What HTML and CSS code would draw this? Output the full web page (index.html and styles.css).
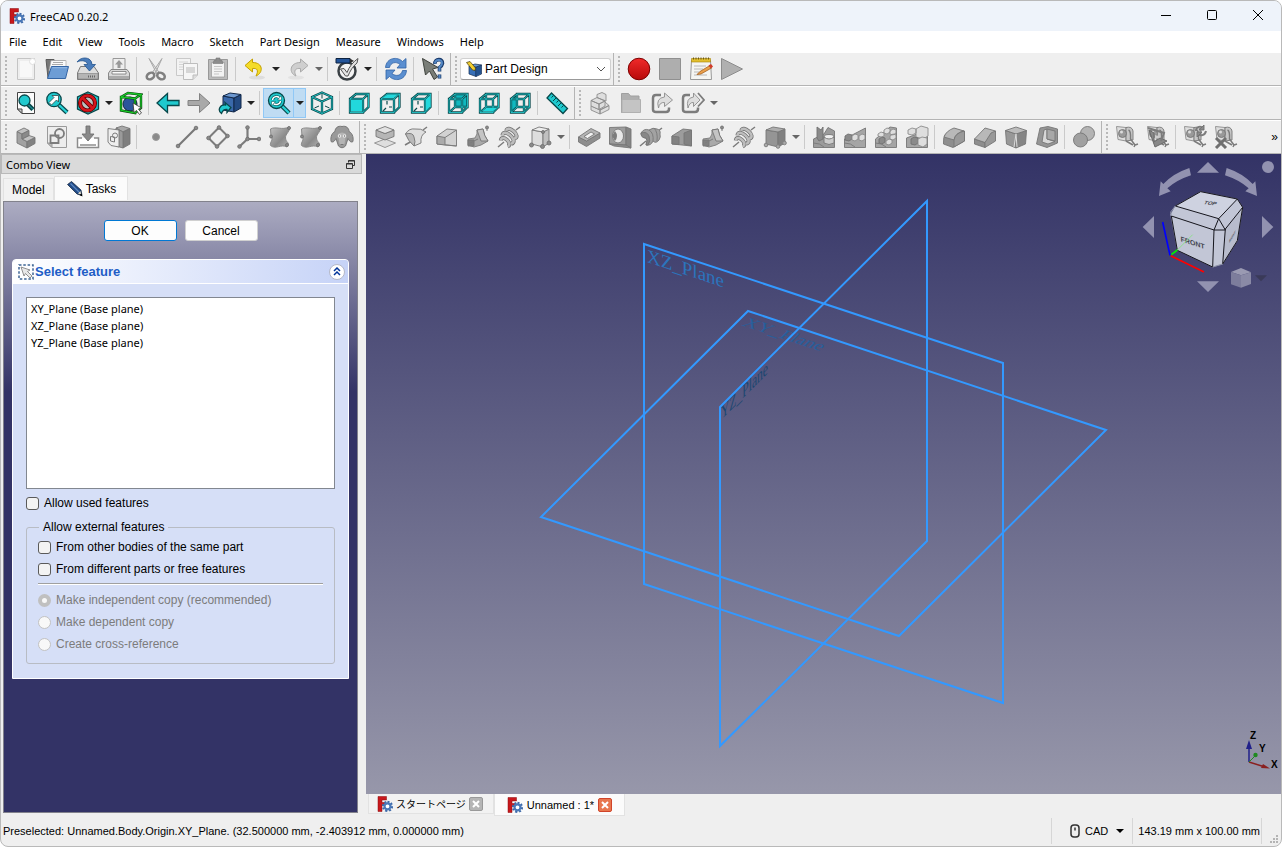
FILE: index.html
```
<!DOCTYPE html>
<html lang="en">
<head>
  <meta charset="UTF-8" />
  <meta name="viewport" content="width=device-width, initial-scale=1.0"/>
  <title>FreeCAD 0.20.2</title>
  <link rel="stylesheet" href="styles.css">
</head>
<body>
  <!-- Icon sprite -->
  <svg class="sprite" aria-hidden="true">
    <defs>
      <linearGradient id="grad-grey" x1="0" y1="0" x2="1" y2="1"><stop offset="0" stop-color="#c4c4c4"/><stop offset=".6" stop-color="#8a8a8a"/><stop offset="1" stop-color="#b4b4b4"/></linearGradient>
      <linearGradient id="grad-red" x1="0" y1="0" x2="0" y2="1"><stop offset="0" stop-color="#f02a2a"/><stop offset="1" stop-color="#b80a0a"/></linearGradient>
      <path id="wire" d="M3 8H16V21.500H3zM9 3H21.500V16H9zM3 8L9 3M16 8L21.500 3M16 21.500L21.500 16M3 21.500L9 16"/>
    </defs>
    <symbol id="i-logo" viewBox="0 0 16 16">
      <path fill="#c8181c" stroke="#8a0a0c" stroke-width=".5" d="M1 .5H9.500V4H5V6.500H8.500V9.500H5V15.500H1z"/>
      <path fill="none" stroke="#3c68a8" stroke-width="2.200" stroke-dasharray="1.900 1.600" d="M10.500 5.800a4.500 4.500 0 1 1-.01 0z"/>
      <circle cx="10.500" cy="10.300" r="3" fill="#fff" stroke="#4a78b8" stroke-width="2.200"/>
    </symbol>
    <symbol id="i-new" viewBox="0 0 24 24"><path fill="#eee" stroke="#c4c4c4" d="M3.500 1.500H20.500V22.500H3.500z"/><path fill="#f8f8f8" d="M6 4H18V20H6z"/><circle cx="18.500" cy="4.500" r="3" fill="#fff" stroke="#e0e0e0"/></symbol>
    <symbol id="i-open" viewBox="0 0 24 24"><path fill="#777" stroke="#5a5a5a" d="M1 2.500H9L10 4H20V21H3z"/><path fill="#fafafa" stroke="#999" stroke-width=".6" d="M6 3.500H21V14H4z"/><path stroke="#aaa" d="M8 5.500H18M7 7.500H18"/><path fill="#6d9dd5" stroke="#3465a4" d="M6.500 9.500H23.500L20.500 21.500H2.500z"/><path stroke="#94b9e6" d="M7.500 10.700H22"/></symbol>
    <symbol id="i-save" viewBox="0 0 24 24"><path fill="#ddd" stroke="#777" d="M4.500 9.500H18L22.500 16V22.500H1.500V16z"/><path fill="#b5b5b5" stroke="#888" stroke-width=".7" d="M2 16.500H22V22H2z"/><path stroke="#666" stroke-dasharray="1 1" stroke-width="2" d="M12 19.500H20"/><path fill="#4a7cba" stroke="#24548e" stroke-width=".8" d="M1 5C4 1 9 0 13 2Q16 4 16 7.500H19.500L13.500 14 8 7.500H11.500C11 4 6 2.500 1 5z"/></symbol>
    <symbol id="i-print" viewBox="0 0 24 24"><path fill="#eee" stroke="#999" d="M6 1.500H18V13H6z"/><path fill="#999" d="M12 3L16 7.500H13.500V11H10.500V7.500H8z"/><path fill="#d8d8d8" stroke="#888" d="M4 12.500H20L22.500 16V22.500H1.500V16z"/><path fill="#fafafa" stroke="#777" stroke-width=".8" d="M5 14.500H19V17H5z"/><path fill="#aaa" d="M2 19H22V22H2z"/></symbol>
    <symbol id="i-cut" viewBox="0 0 24 24"><path fill="#e6e6e6" stroke="#a8a8a8" d="M5 1.500L15.500 16 13 17zM18 1.500L8 16 11 17z"/><ellipse cx="6.500" cy="19" rx="4" ry="3" transform="rotate(-30 6.500 19)" fill="none" stroke="#808080" stroke-width="2.500"/><ellipse cx="17" cy="19" rx="4" ry="3" transform="rotate(30 17 19)" fill="none" stroke="#808080" stroke-width="2.500"/></symbol>
    <symbol id="i-copy" viewBox="0 0 24 24"><path fill="#f3f3f3" stroke="#c9c9c9" d="M1.500 1.500H15.500V18.500H1.500z"/><path stroke="#d4d4d4" d="M4 5H13M4 7.500H13M4 10H8M4 12.500H8"/><path fill="#f6f6f6" stroke="#bdbdbd" d="M8.500 6.500H22.500V18L18 22.500H8.500z"/><path fill="#d6d6d6" d="M11 10H20V16H11z"/><path fill="#ddd" stroke="#bdbdbd" d="M18 22.500V18H22.500"/></symbol>
    <symbol id="i-paste" viewBox="0 0 24 24"><path fill="#bbb" stroke="#999" d="M2.500 2.500H21.500V22.500H2.500z"/><path fill="#f2f2f2" stroke="#999" stroke-width=".7" d="M5.500 5.500H18.500V20H5.500z"/><path fill="#8c8c8c" stroke="#777" stroke-width=".6" d="M8 3.500H10V1H14V3.500H16L17 6.500H7z"/><path stroke="#c6c6c6" d="M8 9.500H16M8 12H16M8 14.500H16M8 17H13"/></symbol>
    <symbol id="i-undo" viewBox="0 0 24 24"><ellipse cx="14" cy="20.500" rx="8" ry="2" fill="#ddd"/><path fill="#f4dc28" stroke="#c4a000" d="M9.500 2L2 8.500 9.500 15V11.500C14 11 16 13 13 19 20.500 16 20.500 5.500 9.500 5.500z"/></symbol>
    <symbol id="i-redo" viewBox="0 0 24 24"><ellipse cx="10" cy="20.500" rx="8" ry="2" fill="#e2e2e2"/><path fill="#cfcfcf" stroke="#aaa" d="M14.500 2L22 8.500 14.500 15V11.500C10 11 7 13 10 19 2.500 16 3.500 5.500 14.500 5.500z"/></symbol>
    <symbol id="i-check" viewBox="0 0 24 24"><circle cx="12" cy="14" r="8.500" fill="#f4f4f4" stroke="#3a4044" stroke-width="2.500"/><path fill="#24559a" stroke="#0d2340" d="M1 1.500H15V6H1z"/><path fill="#333" d="M15 1.500L19 4 15 6z"/><path fill="#e4e4e4" stroke="#555" d="M5.500 12L9 11.500 12 15.500C14 10 18 5 23 1.500L22 6C18 9 15 14 13 19H10.500z"/></symbol>
    <symbol id="i-refresh" viewBox="0 0 24 24"><path fill="#5b8fd0" stroke="#2f62a6" stroke-width=".8" d="M1.500 10.500C2.500 0 14 -.5 18.500 4.500L22 1.500V11H13L16 7.500C12 4 6.500 5.500 5.500 10.500z"/><path fill="#5b8fd0" stroke="#2f62a6" stroke-width=".8" d="M22.500 13.500C21.500 24 10 24.500 5.500 19.500L2 22.500V13H11L8 16.500C12 20 17.500 18.500 18.500 13.500z"/></symbol>
    <symbol id="i-what" viewBox="0 0 24 24"><path fill="#7a7e78" stroke="#3e423d" d="M1.500 1.500L17 10.500 11.500 12 16.500 20 13 22.500 8.500 14 4.500 18z"/><path fill="none" stroke="#1d3e6e" stroke-width="3.600" d="M14 7C13 1.500 22.500 1 21.500 6.500Q21 9 18.500 10.500V14.500M18.500 17.500V21.500"/><path fill="none" stroke="#5387c4" stroke-width="2" d="M14 6.500C13.500 2 21.500 1.500 21 6.500Q20.500 9 18.500 10V14M18.500 18V21"/></symbol>
    <symbol id="i-pd" viewBox="0 0 16 16"><path fill="#3870b8" stroke="#122c50" stroke-width=".7" d="M3 5L10 6V15.500L3 13zM10 6L15.500 4V13L10 15.500z"/><path fill="#24528e" d="M10.400 6.500L15 4.500V12.600L10.400 14.800z"/><path fill="#6596d0" stroke="#122c50" stroke-width=".7" d="M3 5L9 3 15.500 4 10 6z"/><path fill="#f2ce30" stroke="#443a08" stroke-width=".7" d="M.500 1.500L4 .5 9.500 7 9 9.500 6.500 9z"/></symbol>
    <symbol id="i-rec" viewBox="0 0 24 24"><circle cx="12" cy="12" r="10.800" fill="url(#grad-red)" stroke="#7c0000"/></symbol>
    <symbol id="i-stop" viewBox="0 0 24 24"><path fill="#aeaeae" stroke="#909090" d="M1.500 1.500H22.500V22.500H1.500z"/></symbol>
    <symbol id="i-note" viewBox="0 0 24 24"><path fill="#f5f5f2" stroke="#999" d="M2.500 3.500H21.500L22.500 22.500H1.500z"/><path fill="#e2bf2e" stroke="#a58208" stroke-width=".6" d="M2.500 1.500H21.500V5H2.500z"/><path stroke="#6f5a10" stroke-dasharray="1 1.500" stroke-width="2" d="M4 1.500H21"/><path stroke="#b8b8b8" d="M5 9H17M5 12H14M5 15H11M5 18H18"/><path fill="#eaa04c" stroke="#9c5510" stroke-width=".7" d="M20 9L22.500 11 12 17 8 17.500 11 14.500z"/><path fill="#d23b2a" d="M19.500 8.500L22 7 24 9.500 22 11.500z"/></symbol>
    <symbol id="i-play" viewBox="0 0 24 24"><path fill="#b0b0b0" stroke="#8c8c8c" d="M1.500 1.500L22.500 12 1.500 22.500z"/></symbol>

    <symbol id="i-fit" viewBox="0 0 24 24"><path fill="#fbfbfb" stroke="#444" d="M3.500 1.500H20.500V22.500H8L3.500 18z"/><path fill="#ccc" stroke="#444" d="M3.500 18H8V22.500z"/><path class="t-line" d="M13.500 13L19 18.500"/><path class="t-in" d="M13.500 13L19 18.500"/><circle class="teal" cx="10.500" cy="9.500" r="5.500"/></symbol>
    <symbol id="i-zoomsel" viewBox="0 0 24 24"><path class="t-line" d="M14 14L22 21.500"/><path class="t-in wide" d="M14 14L22 21.500"/><circle class="teal" cx="9" cy="8.500" r="7.200"/><path fill="#fff" stroke="#2d4748" stroke-width=".8" d="M7 4.500H13.500V11L11.500 9 6.500 14 4 11.500 9 6.500z"/></symbol>
    <symbol id="i-nostyle" viewBox="0 0 24 24"><path class="teal" d="M12 1L22.500 6V18L12 23 1.500 18V6z"/><circle cx="11.500" cy="12" r="7.500" fill="#b9c2c2" stroke="#5c0000" stroke-width="4.200"/><path stroke="#5c0000" stroke-width="4.500" d="M6.500 7L16.500 17"/><circle cx="11.500" cy="12" r="7.500" fill="none" stroke="#d4141c" stroke-width="2.600"/><path stroke="#d4141c" stroke-width="2.600" d="M6.500 7L16.500 17"/></symbol>
    <symbol id="i-bbox" viewBox="0 0 24 24"><circle cx="11" cy="13" r="7" fill="#2b559b" stroke="#10243f"/><path fill="none" stroke="#033f08" stroke-width="2.400" d="M2 6L16 7.500V22L2 19.500zM2 6L9 2 22 3.500 16 7.500M22 3.500V17L16 22"/><path fill="none" stroke="#18c828" stroke-width="1.300" d="M2 6L16 7.500V22L2 19.500zM2 6L9 2 22 3.500 16 7.500M22 3.500V17L16 22"/><path fill="#fff" stroke="#333" stroke-width=".8" d="M14 12L22.500 17 19.500 18 22.500 22 20.500 23.500 17.500 19.500 15 21.500z"/></symbol>
    <symbol id="i-left" viewBox="0 0 24 24"><path class="teal" d="M1 12L11.500 2.500V9.500H23V14.500H11.500V21.500z"/></symbol>
    <symbol id="i-right" viewBox="0 0 24 24"><path class="g" d="M23 12L12.500 2.500V9.500H1V14.500H12.500V21.500z"/></symbol>
    <symbol id="i-link" viewBox="0 0 24 24"><path fill="#3a69ab" stroke="#112748" d="M5 5L16 7V21L5 19z"/><path fill="#234a82" stroke="#112748" d="M16 7L23 3.500V17L16 21z"/><path fill="#6c97cf" stroke="#112748" d="M5 5L12 2 23 3.500 16 7z"/><path class="teal" d="M7 11.500L13 16.500 9 21.500V18.500C6 18 4.500 20 3.500 22.500 -1 19 2 13.500 7.500 14z"/></symbol>
    <symbol id="i-zoomsync" viewBox="0 0 24 24"><path class="t-line" d="M15 15L22 22"/><path class="t-in wide" d="M15 15L22 22"/><circle class="teal" cx="9.500" cy="9.500" r="8"/><path fill="none" stroke="#0b6064" stroke-width="3" d="M5.500 9C6 5 11 4.500 13 7.500M13.500 10C13 14 8 14.500 6 12"/><path fill="none" stroke="#fff" stroke-width="1.500" d="M5.500 9C6 5 11 4.500 13 7.500M13.500 10C13 14 8 14.500 6 12"/><path fill="#fff" stroke="#0b6064" stroke-width=".6" d="M14.500 4.500V9H10.500zM4.500 15V10.500H8.500z"/></symbol>
    <symbol id="i-iso" viewBox="0 0 24 24"><path class="t-line thin" d="M12 1.500L22 6V18L12 22.500 2 18V6zM2 6L12 10.500 22 6M12 10.500V22.500"/><path class="t-in" d="M12 1.500L22 6V18L12 22.500 2 18V6zM2 6L12 10.500 22 6M12 10.500V22.500"/><path stroke="#08484b" d="M4.500 17L9 15M19.500 17L15 15M12 3V7.500"/></symbol>
    <symbol id="i-front" viewBox="0 0 24 24"><use href="#wirebox"/><path fill="#22d8dc" d="M4 9H15V20.500H4z"/></symbol>
    <symbol id="i-top" viewBox="0 0 24 24"><use href="#wirebox"/><path fill="#22d8dc" d="M4.500 7L9.500 3.500H20L15.500 7z"/></symbol>
    <symbol id="i-rightv" viewBox="0 0 24 24"><use href="#wirebox"/><path fill="#22d8dc" d="M16.800 8.500L21 4.500V15.500L16.800 20z"/></symbol>
    <symbol id="i-rear" viewBox="0 0 24 24"><path fill="#10b8bf" d="M9 3H21.500V16H9z"/><use href="#wire" class="t-line thin"/><use href="#wire" class="t-in"/></symbol>
    <symbol id="i-bottom" viewBox="0 0 24 24"><use href="#wire" class="t-line thin"/><use href="#wire" class="t-in"/><path fill="#22d8dc" d="M5 20.500L9.500 17H20L15.500 20.500z"/></symbol>
    <symbol id="i-leftv" viewBox="0 0 24 24"><path fill="#10b8bf" d="M3 8L9 3V16L3 21.500z"/><use href="#wire" class="t-line thin"/><use href="#wire" class="t-in"/></symbol>
    <symbol id="i-ruler" viewBox="0 0 24 24"><path class="teal" d="M6.500 2L22.500 17.500 18 22.500 2 7z"/><path stroke="#084548" d="M8.500 4.500L6.500 6.500M11 7L8 10M13.500 9.500L11.500 11.500M16 12L13 15M18.500 14.500L16.500 16.500"/></symbol>
    <symbol id="wirebox" viewBox="0 0 24 24"><path class="t-line thin" d="M3 8H16V21.500H3zM3 8L9 3H21.500V16L16 21.500M16 8L21.500 3"/><path class="t-in" d="M3 8H16V21.500H3zM3 8L9 3H21.500V16L16 21.500M16 8L21.500 3"/><path stroke="#08484b" stroke-width="1.200" d="M9 10V13.500M5 20L8 17M11 16H14"/></symbol>
    <symbol id="i-part" viewBox="0 0 24 24"><path class="gl" d="M3 15L12 19V23L3 19zM12 19L21 14.500V18.500L12 23zM12 13L17 11 21 14.500 12 19z"/><path class="gl" d="M3 9.500L11 13V18.500L3 15zM3 9.500L9 6.500 17 10 11 13zM11 13L17 10V15L11 18.500zM9 6.500V3.500L14 1.500 18 3.500V10L14 8.500z"/></symbol>
    <symbol id="i-folder" viewBox="0 0 24 24"><path fill="#b0b0b0" stroke="#a0a0a0" d="M2.500 2.500H9.500L11.500 5H20V21.500H2.500z"/><path fill="#c4c4c4" stroke="#b0b0b0" d="M3 8.500H21.500V21.500H3z"/></symbol>
    <symbol id="i-share" viewBox="0 0 24 24"><path class="n thick" d="M11 4H6Q3 4 3 7V18.500Q3 21 6 21H16Q19 21 19 18V16.500"/><path class="gl" d="M14.500 2L22.500 9 14.500 15.500V11.500Q9.500 11 8.500 17 5.500 7 14.500 6z"/></symbol>
    <symbol id="i-share2" viewBox="0 0 24 24"><path class="n thick" d="M9 4H5Q2 4 2 7V18.500Q2 21 5 21H14Q17 21 17 18V16.500"/><path class="gl" d="M12.500 2L19 9 12.500 15.500V11.500Q8.500 11 7 17 4.500 7 12.500 6z"/><path class="n" stroke-width="1.800" d="M17 2L23 9 17 15.500"/></symbol>

    <symbol id="i-body" viewBox="0 0 24 24"><path fill="#a2a2a2" class="s" d="M3 6.500L8 9V14L13 16.500V23L3 18z"/><path fill="#838383" class="s" d="M13 16.500L21 12.500V18.500L13 23z"/><path fill="#c2c2c2" class="s" d="M3 6.500L10 3 15 5.500 8 9zM8 14L15 10.500 21 12.500 13 16.500z"/><path fill="#8a8a8a" class="s" d="M8 9L15 5.500V10.500L8 14z"/></symbol>
    <symbol id="i-sketch" viewBox="0 0 24 24"><path fill="#ededed" stroke="#9a9a9a" d="M2.500 1.500H21.500V22.500H7L2.500 18z"/><path fill="#bbb" stroke="#9a9a9a" d="M2.500 18H7V22.500z"/><circle cx="14.500" cy="8.500" r="4.500" class="n" stroke-width="1.800"/><path class="n" stroke-width="1.800" d="M5.500 10.500H13.500V18H5.500z"/></symbol>
    <symbol id="i-import" viewBox="0 0 24 24"><path fill="#fff" stroke="#8c8c8c" stroke-width="1.500" d="M6 13H1.500V22.500H22.500V13H18"/><path class="gd" d="M10 1H14V9H18L12 16 6 9H10z"/><path stroke="#aaa" stroke-width="2" d="M4 20H20"/></symbol>
    <symbol id="i-binder" viewBox="0 0 24 24"><path fill="#a8a8a8" class="s" d="M9 3L15 1 23 3.500 16 7z"/><path fill="#7e7e7e" class="s" d="M16 7L23 3.500V19L16 23z"/><path fill="#9a9a9a" class="s" d="M9 3L16 7V23L9 21z"/><path fill="#eee" class="s" d="M1 3.500L12 5V22L4 20.500 1 17z"/><circle cx="8" cy="10.500" r="2.500" class="n"/><path class="n" d="M3.500 11.500L7.500 12V17L3.500 16z"/></symbol>
    <symbol id="i-dot" viewBox="0 0 24 24"><circle cx="12" cy="12" r="3.500" fill="#8a8a8a" stroke="#9c9c9c"/></symbol>
    <symbol id="i-line" viewBox="0 0 24 24"><path stroke="#787878" stroke-width="2.200" d="M3 21L21 3"/><circle class="gd" cx="3" cy="21" r="1.800"/><circle class="gd" cx="21" cy="3" r="1.800"/></symbol>
    <symbol id="i-plane" viewBox="0 0 24 24"><path class="n" stroke-width="2" d="M13 2.500L21.500 11 11 21.500 2.500 13z"/><circle class="gd" cx="13" cy="2.500" r="1.800"/><circle class="gd" cx="21.500" cy="11" r="1.800"/><circle class="gd" cx="11" cy="21.500" r="1.800"/><circle class="gd" cx="2.500" cy="13" r="1.800"/></symbol>
    <symbol id="i-axes" viewBox="0 0 24 24"><path class="n" stroke-width="2.200" d="M10.500 2V14H22M10.500 14L2.500 21.500"/><circle class="gd" cx="10.500" cy="2.500" r="1.800"/><circle class="gd" cx="10.500" cy="14" r="1.800"/><circle class="gd" cx="22" cy="14" r="1.800"/><circle class="gd" cx="2.500" cy="21.500" r="1.800"/></symbol>
    <symbol id="i-patch" viewBox="0 0 24 24"><path fill="url(#grad-grey)" stroke="#8a8a8a" d="M2.500 4C8 1 14 5.500 21 2 23 6 17 9 17.500 13 18 17 20 17 20.500 19L19 22C13 18.500 8 25 2.500 20.500 1.500 17 6 15 3 11.500z"/><circle class="gd" cx="21" cy="3" r="1.500"/><circle class="gd" cx="19" cy="20" r="1.500"/><circle class="gd" cx="3" cy="11.500" r="1.500"/></symbol>
    <symbol id="i-sheep" viewBox="0 0 24 24"><path fill="#999" stroke="#777" d="M12 1.500C8 .5 5 3 5 6.500 1 8 0 15 1.500 17 4 17.500 5 15 6 13.500L8.500 21Q12 24.500 15.500 21L18 13.500C19 15 20 17.500 22.500 17 24 15 23 8 19 6.500 19 3 16 .5 12 1.500z"/><path fill="#b4b4b4" d="M8 9Q12 6 16 9L14.500 19Q12 21.500 9.500 19z"/><circle cx="9.500" cy="11" r="1.800" fill="#e4e4e4"/><circle cx="14.500" cy="11" r="1.800" fill="#e4e4e4"/><path fill="#555" d="M9 10.500h1v1h-1zM14 10.500h1v1h-1z"/><path stroke="#777" d="M10.500 19.500H13.500"/></symbol>
    <symbol id="i-pad" viewBox="0 0 24 24"><path class="gl" d="M1.500 18L12 14 22.500 18 12 22.500z"/><path fill="#b6b6b6" class="s" d="M3 5V11.500L12 15 21 11.500V5L12 8.500z"/><path fill="#e2e2e2" class="s" d="M3 5L12 1.500 21 5 12 8.500z"/></symbol>
    <symbol id="i-revolve" viewBox="0 0 24 24"><path class="n" stroke-width="1.500" d="M1 20L8 16M19 5L23 2"/><path fill="#dedede" class="s" d="M1.500 9Q5 3 11 4 17 3 22 7 16 10 17 18L10 21Q11 13 6 11z"/><path fill="#b9b9b9" class="s" d="M1.500 9Q9 7 10 12 12 17 10 21 4 16 1.500 9z"/></symbol>
    <symbol id="i-loft" viewBox="0 0 24 24"><path fill="#d2d2d2" class="s" d="M2 11L12 4 21.500 5V21L12 20 2 19z"/><path fill="#ababab" class="s" d="M2 11L10 12.500V20L2 19z"/><path class="n" d="M10 12.500L21.500 5M10 20L21.500 21"/></symbol>
    <symbol id="i-pipe" viewBox="0 0 24 24"><path class="g" d="M2 14L9 13Q12 9 11 5L17 4Q18 11 22 16L15 20 8 22 2 20z"/><path fill="#c4c4c4" class="s" d="M11 5L15 16 22 16Q18 11 17 4z"/><path fill="#808080" class="s" d="M2 15H8V21H2z"/><circle class="gd" cx="21" cy="2.500" r="1.500"/><path class="n" d="M4 18L12 14M21 4V6"/></symbol>
    <symbol id="i-helix" viewBox="0 0 24 24"><path class="n" stroke-width="1.500" d="M1 22L7 17M19 5L23 2"/><g fill="none" transform="rotate(40 12 12)"><path stroke="#707070" stroke-width="4" d="M6 9C2 3 22 3 17 10M6 15C1 8 23 8 18 16M8 20C4 14 20 14 17 20"/><path stroke="#bdbdbd" stroke-width="2.500" d="M6 9C2 3 22 3 17 10M6 15C1 8 23 8 18 16M8 20C4 14 20 14 17 20"/></g></symbol>
    <symbol id="i-prim" viewBox="0 0 24 24"><path fill="#ddd" class="s" d="M4 5L15 7V22L4 19z"/><path fill="#c0c0c0" class="s" d="M15 7L21 4V18L15 22z"/><path fill="#eee" class="s" d="M4 5L11 2 21 4 15 7z"/><circle class="gd" cx="3.500" cy="20" r="2"/><circle class="gd" cx="14.500" cy="21.500" r="2"/><circle class="gd" cx="21" cy="18" r="2"/><circle class="gd" cx="15" cy="7" r="1.500"/></symbol>
    <symbol id="i-pocket" viewBox="0 0 24 24"><path fill="#8e8e8e" class="s" d="M1.500 12V17L9.500 21.500 23 13V8L9.500 16z"/><path fill="#b4b4b4" class="s" d="M1.500 12L14 3.500 23 8 9.500 16z"/><path fill="#f2f2f2" class="s" d="M7 11.500L14 7 17.500 9 10.500 13.500z"/></symbol>
    <symbol id="i-hole" viewBox="0 0 24 24"><path fill="#9d9d9d" class="s" d="M1.500 2.500L18 2V20L1.500 19z"/><path fill="#858585" class="s" d="M18 2L23 4V23L18 20z"/><ellipse cx="10" cy="11" rx="5.500" ry="7" fill="#e8e8e8" class="s"/><path fill="#7c7c7c" d="M7 6Q11 11 7 16 4.500 13 4.500 10z"/><path class="s" fill="#8b8b8b" d="M1.500 19L18 20 23 23 6 21z"/></symbol>
    <symbol id="i-groove" viewBox="0 0 24 24"><path class="n" stroke-width="1.500" d="M1 21L7 16M19 6L23 3"/><path fill="#a2a2a2" class="s" d="M2 8Q5 3 10 5 14 2 18 4 22 5 21 9 22 12 20 15 17 19 14 16 12 21 7 20 9 15 7 13 2 13 2 8z"/><path fill="#888" class="s" d="M2 8Q8 6 10 11 12 16 9 20L7 20Q9 15 7 13 2 13 2 8z"/><path class="n" d="M10 5Q15 8 14 16M15 3Q19 7 18 16"/></symbol>
    <symbol id="i-subloft" viewBox="0 0 24 24"><path fill="#9c9c9c" class="s" d="M2 11L13 4 21.500 5V21L12 20 2 19z"/><path fill="#828282" class="s" d="M2 11L9 12V19.500L2 19zM14 8L21.500 5V21L14 19z"/></symbol>
    <symbol id="i-subprim" viewBox="0 0 24 24"><path fill="#959595" class="s" d="M3 5L15 7V22L3 19z"/><path fill="#808080" class="s" d="M15 7L22 4V18L15 22z"/><path fill="#aeaeae" class="s" d="M3 5L10 2 22 4 15 7z"/><circle class="g" cx="3" cy="20" r="1.800"/><circle class="g" cx="15" cy="21.500" r="1.800"/><circle class="g" cx="21.500" cy="18" r="1.800"/></symbol>
    <symbol id="i-mirror" viewBox="0 0 24 24"><path fill="#9b9b9b" class="s" d="M1.500 14L12 9 16 2.500 22.500 6V22.500H1.500z"/><path class="gd" d="M5 2L9 5 11 2V14L7 16 5 13z"/><path class="n" d="M1.500 18Q8 18 12 22"/><ellipse cx="17" cy="12" rx="5" ry="2.500" fill="#eee" class="s"/><path fill="#ccc" class="s" d="M12 12V18Q17 21 22 18V12Q17 16 12 12z"/></symbol>
    <symbol id="i-linpat" viewBox="0 0 24 24"><path fill="#a5a5a5" class="s" d="M1.500 14L22.500 3V22.500H1.500z"/><path class="gd" d="M2 11l3-2 4 1v4l-3 2-4-1z"/><path class="gl" d="M9 11l3-2 3 1v4l-3 2-3-1zM16 11l3-2 3 1v4l-3 2-3-1z"/><path class="n" d="M1.500 18Q8 18 12 22"/></symbol>
    <symbol id="i-polpat" viewBox="0 0 24 24"><path fill="#a5a5a5" class="s" d="M1.500 14L16 2 22.500 3V22.500H1.500z"/><path class="gd" d="M5 14l3-2 3 1v4l-3 2-3-1z"/><path class="gl" d="M4 9l3-2 3 1v3l-3 1-3-1zM10 5l3-2 3 1v3l-3 2-3-1zM16 6l3-2 3 1v3l-3 2-3-1zM12 16l3-2 3 1v3l-3 2-3-1zM16 11l3-2 3 1v3l-3 2-3-1z"/><path class="n" d="M1.500 18Q8 18 12 22"/></symbol>
    <symbol id="i-multi" viewBox="0 0 24 24"><path fill="#a5a5a5" class="s" d="M1.500 13L12 9H22.500V22.500H1.500z"/><path class="gl" d="M3 5l4-2 4 1v4l-4 2-4-1zM11 4l5-3 7 2v8l-5 3-7-2z"/><path class="gd" d="M6 14l3-2 4 1v5l-3 2-4-1z"/><path class="gl" d="M13 14l4-2 5 1v6l-4 3-5-2z"/></symbol>
    <symbol id="i-fillet" viewBox="0 0 24 24"><path fill="#8e8e8e" class="s" d="M1.500 17Q1 8 9 6L13 4 22.500 6.500V16L11 22.500 1.500 19z"/><path fill="#b8b8b8" class="s" d="M2 12Q4 6 12 3L22 6Q13 8 12 15z"/><path fill="#999" class="s" d="M12 15Q13 8 22.500 6V16L12 22z"/></symbol>
    <symbol id="i-chamfer" viewBox="0 0 24 24"><path fill="#8e8e8e" class="s" d="M1.500 14L12 17.500V22.500L1.500 19z"/><path fill="#b8b8b8" class="s" d="M1.500 14L12 3 22.500 6 12 17.500z"/><path fill="#999" class="s" d="M12 17.500L18 8 22.500 6V16L12 22.500z"/></symbol>
    <symbol id="i-draft" viewBox="0 0 24 24"><path fill="#989898" class="s" d="M1.500 5.500L12 9V23L2.500 19z"/><path fill="#858585" class="s" d="M12 9L22.500 5.500 21.500 19 12 23z"/><path fill="#bcbcbc" class="s" d="M1.500 5.500L12 2 22.500 5.500 12 9z"/><path stroke="#ddd" d="M12 9L13 22M12 9L10 22"/></symbol>
    <symbol id="i-shell" viewBox="0 0 24 24"><path fill="#959595" class="s" d="M5 3L13 1.500 22.500 4V18L12 22.500 1.500 19z"/><path fill="#d8d8d8" class="s" d="M9 5L12 4V14L20 16.500 13 19 7 17z"/><path fill="#a8a8a8" class="s" d="M12 4L20 6V16L12 14z"/></symbol>
    <symbol id="i-bool" viewBox="0 0 24 24"><circle cx="15.500" cy="8.500" r="7" fill="#b4b4b4" class="s"/><circle cx="8.500" cy="15" r="7" fill="#a0a0a0" class="s"/></symbol>
    <symbol id="i-tape" viewBox="0 0 24 24"><path class="gl" d="M1.500 1.500L11 2.500V16L3 14.500z"/><path fill="#c6c6c6" class="s" d="M11 2.500Q17 1 18 6V15L11 16z"/><circle cx="7.500" cy="8.500" r="4" fill="#999" class="s"/><circle cx="6.500" cy="7" r="1.500" fill="#ddd"/><path class="n" stroke-width="1.500" d="M13.500 5Q16 6 15.500 14L20 20 23 19M20 20L19 22M11 16L18 20"/></symbol>
    <symbol id="i-tape2" viewBox="0 0 24 24"><use href="#i-tape"/><path fill="#888" stroke="#6a6a6a" d="M3 5L8 8V17L14 13 21 16 9 22z"/><path fill="#ccc" d="M9 14V10L15 12z"/><path class="n" stroke-width="2" d="M2 3L18 8L15 16"/></symbol>
    <symbol id="i-tape3" viewBox="0 0 24 24"><use href="#i-tape"/><path class="n" stroke-width="2" d="M13 6C13 1 18 1 20 3M23 6C22 11 17 11 15 9"/><path class="gd" d="M21 0V5H16zM14 12V7H19z"/></symbol>
    <symbol id="i-tape4" viewBox="0 0 24 24"><use href="#i-tape"/><path stroke="#707070" stroke-width="3" d="M2 13L12 23M12 13L2 23"/></symbol>
  </svg>

  <header class="titlebar">
    <svg class="icon-sm"><use href="#i-logo"/></svg>
    <h1>FreeCAD 0.20.2</h1>
    <div class="window-buttons">
      <button type="button" aria-label="Minimize"><svg width="12" height="12"><path d="M1 6.500H11"/></svg></button>
      <button type="button" aria-label="Maximize"><svg width="12" height="12"><rect x="1.500" y="1.500" width="9" height="9" rx="1"/></svg></button>
      <button type="button" aria-label="Close"><svg width="12" height="12"><path d="M1 1L11 11M11 1L1 11"/></svg></button>
    </div>
  </header>

  <nav class="menubar">
    <a href="#">File</a>
    <a href="#">Edit</a>
    <a href="#">View</a>
    <a href="#">Tools</a>
    <a href="#">Macro</a>
    <a href="#">Sketch</a>
    <a href="#">Part Design</a>
    <a href="#">Measure</a>
    <a href="#">Windows</a>
    <a href="#">Help</a>
  </nav>

  <div class="toolbar-row">
    <div class="toolbar">
      <button type="button" class="tool" aria-label="New" disabled><svg class="icon"><use href="#i-new"/></svg></button>
      <button type="button" class="tool" aria-label="Open"><svg class="icon"><use href="#i-open"/></svg></button>
      <button type="button" class="tool" aria-label="Save"><svg class="icon"><use href="#i-save"/></svg></button>
      <button type="button" class="tool" aria-label="Print" disabled><svg class="icon"><use href="#i-print"/></svg></button>
      <span class="sep"></span>
      <button type="button" class="tool" aria-label="Cut" disabled><svg class="icon"><use href="#i-cut"/></svg></button>
      <button type="button" class="tool" aria-label="Copy" disabled><svg class="icon"><use href="#i-copy"/></svg></button>
      <button type="button" class="tool" aria-label="Paste" disabled><svg class="icon"><use href="#i-paste"/></svg></button>
      <span class="sep"></span>
      <button type="button" class="tool" aria-label="Undo"><svg class="icon"><use href="#i-undo"/></svg></button>
      <button type="button" class="drop" aria-label="Undo list"></button>
      <button type="button" class="tool" aria-label="Redo" disabled><svg class="icon"><use href="#i-redo"/></svg></button>
      <button type="button" class="drop" aria-label="Redo list" disabled></button>
      <span class="sep"></span>
      <button type="button" class="tool" aria-label="Edit mode"><svg class="icon"><use href="#i-check"/></svg></button>
      <button type="button" class="drop" aria-label="Edit modes"></button>
      <span class="sep"></span>
      <button type="button" class="tool" aria-label="Refresh"><svg class="icon"><use href="#i-refresh"/></svg></button>
      <span class="sep"></span>
      <button type="button" class="tool" aria-label="What's this?"><svg class="icon"><use href="#i-what"/></svg></button>
    </div>
    <div class="toolbar">
      <div class="workbench">
        <svg class="icon-sm"><use href="#i-pd"/></svg>
        <select aria-label="Workbench"><option>Part Design</option></select>
        <svg class="chevron" width="10" height="6"><path d="M1 1L5 5L9 1"/></svg>
      </div>
    </div>
    <div class="toolbar last">
      <button type="button" class="tool" aria-label="Record macro"><svg class="icon"><use href="#i-rec"/></svg></button>
      <button type="button" class="tool" aria-label="Stop macro" disabled><svg class="icon"><use href="#i-stop"/></svg></button>
      <button type="button" class="tool" aria-label="Macros"><svg class="icon"><use href="#i-note"/></svg></button>
      <button type="button" class="tool" aria-label="Execute macro" disabled><svg class="icon"><use href="#i-play"/></svg></button>
    </div>
  </div>

  <div class="toolbar-row">
    <div class="toolbar">
      <button type="button" class="tool" aria-label="Fit all"><svg class="icon"><use href="#i-fit"/></svg></button>
      <button type="button" class="tool" aria-label="Fit selection"><svg class="icon"><use href="#i-zoomsel"/></svg></button>
      <button type="button" class="tool" aria-label="Draw style"><svg class="icon"><use href="#i-nostyle"/></svg></button>
      <button type="button" class="drop" aria-label="Draw styles"></button>
      <button type="button" class="tool" aria-label="Bounding box"><svg class="icon"><use href="#i-bbox"/></svg></button>
      <span class="sep"></span>
      <button type="button" class="tool" aria-label="Back"><svg class="icon"><use href="#i-left"/></svg></button>
      <button type="button" class="tool" aria-label="Forward" disabled><svg class="icon"><use href="#i-right"/></svg></button>
      <button type="button" class="tool" aria-label="Go to linked object"><svg class="icon"><use href="#i-link"/></svg></button>
      <button type="button" class="drop" aria-label="Link actions"></button>
      <span class="sep"></span>
      <button type="button" class="tool on" aria-label="Sync view"><svg class="icon"><use href="#i-zoomsync"/></svg></button>
      <button type="button" class="drop on" aria-label="Sync view options"></button>
      <button type="button" class="tool" aria-label="Isometric"><svg class="icon"><use href="#i-iso"/></svg></button>
      <span class="sep"></span>
      <button type="button" class="tool" aria-label="Front"><svg class="icon"><use href="#i-front"/></svg></button>
      <button type="button" class="tool" aria-label="Top"><svg class="icon"><use href="#i-top"/></svg></button>
      <button type="button" class="tool" aria-label="Right"><svg class="icon"><use href="#i-rightv"/></svg></button>
      <span class="sep"></span>
      <button type="button" class="tool" aria-label="Rear"><svg class="icon"><use href="#i-rear"/></svg></button>
      <button type="button" class="tool" aria-label="Bottom"><svg class="icon"><use href="#i-bottom"/></svg></button>
      <button type="button" class="tool" aria-label="Left"><svg class="icon"><use href="#i-leftv"/></svg></button>
      <span class="sep"></span>
      <button type="button" class="tool" aria-label="Measure distance"><svg class="icon"><use href="#i-ruler"/></svg></button>
    </div>
    <div class="toolbar last">
      <button type="button" class="tool" aria-label="Create part" disabled><svg class="icon"><use href="#i-part"/></svg></button>
      <button type="button" class="tool" aria-label="Create group" disabled><svg class="icon"><use href="#i-folder"/></svg></button>
      <button type="button" class="tool" aria-label="Make link" disabled><svg class="icon"><use href="#i-share"/></svg></button>
      <button type="button" class="tool" aria-label="Make link group" disabled><svg class="icon"><use href="#i-share2"/></svg></button>
      <button type="button" class="drop" aria-label="Link groups" disabled></button>
    </div>
  </div>

  <div class="toolbar-row">
    <div class="toolbar">
      <button type="button" class="tool" aria-label="Create body" disabled><svg class="icon"><use href="#i-body"/></svg></button>
      <button type="button" class="tool" aria-label="Create sketch" disabled><svg class="icon"><use href="#i-sketch"/></svg></button>
      <button type="button" class="tool" aria-label="Edit sketch" disabled><svg class="icon"><use href="#i-import"/></svg></button>
      <button type="button" class="tool" aria-label="Map sketch to face" disabled><svg class="icon"><use href="#i-binder"/></svg></button>
      <span class="sep"></span>
      <button type="button" class="tool" aria-label="Datum point" disabled><svg class="icon"><use href="#i-dot"/></svg></button>
      <button type="button" class="tool" aria-label="Datum line" disabled><svg class="icon"><use href="#i-line"/></svg></button>
      <button type="button" class="tool" aria-label="Datum plane" disabled><svg class="icon"><use href="#i-plane"/></svg></button>
      <button type="button" class="tool" aria-label="Coordinate system" disabled><svg class="icon"><use href="#i-axes"/></svg></button>
      <button type="button" class="tool" aria-label="Shape binder" disabled><svg class="icon"><use href="#i-patch"/></svg></button>
      <button type="button" class="tool" aria-label="Sub-shape binder" disabled><svg class="icon"><use href="#i-patch"/></svg></button>
      <button type="button" class="tool" aria-label="Clone" disabled><svg class="icon"><use href="#i-sheep"/></svg></button>
    </div>
    <div class="toolbar">
      <button type="button" class="tool" aria-label="Pad" disabled><svg class="icon"><use href="#i-pad"/></svg></button>
      <button type="button" class="tool" aria-label="Revolution" disabled><svg class="icon"><use href="#i-revolve"/></svg></button>
      <button type="button" class="tool" aria-label="Additive loft" disabled><svg class="icon"><use href="#i-loft"/></svg></button>
      <button type="button" class="tool" aria-label="Additive pipe" disabled><svg class="icon"><use href="#i-pipe"/></svg></button>
      <button type="button" class="tool" aria-label="Additive helix" disabled><svg class="icon"><use href="#i-helix"/></svg></button>
      <button type="button" class="tool" aria-label="Additive primitive" disabled><svg class="icon"><use href="#i-prim"/></svg></button>
      <button type="button" class="drop" aria-label="Additive primitives" disabled></button>
      <span class="sep"></span>
      <button type="button" class="tool" aria-label="Pocket" disabled><svg class="icon"><use href="#i-pocket"/></svg></button>
      <button type="button" class="tool" aria-label="Hole" disabled><svg class="icon"><use href="#i-hole"/></svg></button>
      <button type="button" class="tool" aria-label="Groove" disabled><svg class="icon"><use href="#i-groove"/></svg></button>
      <button type="button" class="tool" aria-label="Subtractive loft" disabled><svg class="icon"><use href="#i-subloft"/></svg></button>
      <button type="button" class="tool" aria-label="Subtractive pipe" disabled><svg class="icon"><use href="#i-pipe"/></svg></button>
      <button type="button" class="tool" aria-label="Subtractive helix" disabled><svg class="icon"><use href="#i-helix"/></svg></button>
      <button type="button" class="tool" aria-label="Subtractive primitive" disabled><svg class="icon"><use href="#i-subprim"/></svg></button>
      <button type="button" class="drop" aria-label="Subtractive primitives" disabled></button>
      <span class="sep"></span>
      <button type="button" class="tool" aria-label="Mirrored" disabled><svg class="icon"><use href="#i-mirror"/></svg></button>
      <button type="button" class="tool" aria-label="Linear pattern" disabled><svg class="icon"><use href="#i-linpat"/></svg></button>
      <button type="button" class="tool" aria-label="Polar pattern" disabled><svg class="icon"><use href="#i-polpat"/></svg></button>
      <button type="button" class="tool" aria-label="MultiTransform" disabled><svg class="icon"><use href="#i-multi"/></svg></button>
      <span class="sep"></span>
      <button type="button" class="tool" aria-label="Fillet" disabled><svg class="icon"><use href="#i-fillet"/></svg></button>
      <button type="button" class="tool" aria-label="Chamfer" disabled><svg class="icon"><use href="#i-chamfer"/></svg></button>
      <button type="button" class="tool" aria-label="Draft" disabled><svg class="icon"><use href="#i-draft"/></svg></button>
      <button type="button" class="tool" aria-label="Thickness" disabled><svg class="icon"><use href="#i-shell"/></svg></button>
      <span class="sep"></span>
      <button type="button" class="tool" aria-label="Boolean operation" disabled><svg class="icon"><use href="#i-bool"/></svg></button>
    </div>
    <div class="toolbar last">
      <button type="button" class="tool" aria-label="Measure linear" disabled><svg class="icon"><use href="#i-tape"/></svg></button>
      <button type="button" class="tool" aria-label="Measure angular" disabled><svg class="icon"><use href="#i-tape2"/></svg></button>
      <span class="sep"></span>
      <button type="button" class="tool" aria-label="Measure refresh" disabled><svg class="icon"><use href="#i-tape3"/></svg></button>
      <button type="button" class="tool" aria-label="Measure clear all" disabled><svg class="icon"><use href="#i-tape4"/></svg></button>
      <button type="button" class="more" aria-label="More tools">»</button>
    </div>
  </div>

  <main>
    <aside class="dock">
      <div class="dock-title">
        <h2>Combo View</h2>
        <button type="button" aria-label="Float"><svg width="9" height="9"><path d="M2.500 2.500V.5H8.500V5.500H6.500M.5 3.500H6.500V8.500H.5zM.5 4H6.500M2.500 1H8.500"/></svg></button>
      </div>
      <div class="dock-tabs">
        <button type="button">Model</button>
        <button type="button" class="active">
          <svg width="16" height="16" viewBox="0 0 16 16"><path fill="#204a87" stroke="#0b1b30" stroke-width=".7" d="M.5 3.500L4.500 .5 14 9 15 14.500 10 13z"/><path stroke="#5c88bf" stroke-width="1.200" d="M3.500 2.500L12 11"/><path fill="#e8e0c8" d="M13.500 10L11 12.500 14 13.500z"/><path fill="#000" d="M14.500 12.500L15.500 15.500 12.500 14z"/></svg>
          Tasks
        </button>
      </div>
      <div class="task-panel">
        <div class="dialog-buttons">
          <button type="button" class="default">OK</button>
          <button type="button">Cancel</button>
        </div>

        <section class="task-box">
          <div class="task-head">
            <svg width="16" height="16" viewBox="0 0 16 16"><path fill="none" stroke="#3d6494" stroke-width="1.500" stroke-dasharray="2.500 1.800" d="M1 1H15V15H1z"/><path fill="#e8e8e8" stroke="#777" stroke-width=".8" d="M3 3L12 6 9.500 7.500 14 12 12 14 7.500 9.500 6 12z"/></svg>
            <h3>Select feature</h3>
            <button type="button" aria-label="Collapse"><svg width="8" height="9"><path d="M1 4L4 1L7 4M1 8L4 5L7 8"/></svg></button>
          </div>
          <div class="task-body">
            <ul class="feature-list">
              <li>XY_Plane (Base plane)</li>
              <li>XZ_Plane (Base plane)</li>
              <li>YZ_Plane (Base plane)</li>
            </ul>
            <label class="option used"><input type="checkbox">Allow used features</label>
            <fieldset>
              <legend>Allow external features</legend>
              <label class="option"><input type="checkbox">From other bodies of the same part</label>
              <label class="option"><input type="checkbox">From different parts or free features</label>
              <hr>
              <label class="option off"><input type="radio" name="copy" checked disabled>Make independent copy (recommended)</label>
              <label class="option off"><input type="radio" name="copy" disabled>Make dependent copy</label>
              <label class="option off"><input type="radio" name="copy" disabled>Create cross-reference</label>
            </fieldset>
          </div>
        </section>
      </div>
    </aside>

    <div class="workspace">
      <div class="view3d">
        <svg class="scene" viewBox="0 0 915 640" role="img" aria-label="Base planes">
          <g class="plane-label">
            <text class="xz" transform="matrix(1 .33 0 1 281 108)">XZ_Plane</text>
            <text class="xy" transform="matrix(1 .33 -.61 .61 375 171)">XY_Plane</text>
            <text class="yz" transform="matrix(.61 -.61 0 1 355 266)">YZ_Plane</text>
          </g>
          <path class="plane" d="M278 90L637 209V549L278 430z"/>
          <path class="plane" d="M354 253L561 47V387L354 592z"/>
          <path class="plane" d="M382 157L740 276 533 482 175 363z"/>
        </svg>

        <svg class="navcube" viewBox="60 12 423 438" aria-label="Navigation cube">
          <g fill="#9292b0">
            <path d="M264 36L297 68H231zM264 426L297 394H231zM68 231L102 198V264zM460 231L426 198V264z"/>
            <circle cx="444" cy="51" r="18"/>
            <path d="M208 54L213 76Q170 90 142 115L152 124 117 138 122 94 130 102Q160 70 208 54z"/>
            <path d="M320 54L315 76Q358 90 386 115L376 124 411 138 406 94 398 102Q368 70 320 54z"/>
          </g>
          <path fill="#c2c6d6" stroke="#c2c6d6" d="M152 193L166 168 242 125 352 147 368 172 352 272 308 342 278 351 172 301 153 200z"/>
          <path fill="#ced2e0" d="M166 168L242 125 352 147 296 206z"/>
          <path fill="#b8bccc" d="M316 238L368 172 352 272 308 342z"/>
          <g fill="none" stroke="#15151c" stroke-width="3">
            <path d="M166 168L242 125 352 147 296 206zM154 198L282 240 278 351 172 301zM316 237L368 172 352 272 308 342zM296 206L282 240H316zM352 147L368 172"/>
          </g>
          <path fill="none" stroke="#8e93a8" stroke-width="3" d="M154 198L152 186 166 168M278 351L308 342"/>
          <text class="face" font-size="21" transform="matrix(1 .32 .05 1 182 274)">FRONT</text>
          <text class="face" font-size="18" transform="matrix(1 .12 -.5 .8 250 162)">TOP</text>
          <text class="face" font-size="13" transform="matrix(.45 -.75 0 1 328 280)">RIGHT</text>
          <g fill="none" stroke-width="5">
            <path stroke="#00f" d="M128 216L150 316"/>
            <path stroke="#f00" d="M152 317L252 366"/>
            <path stroke="#00f000" d="M154 314L172 300"/>
            <path stroke="#90e090" stroke-width="3" d="M172 300L218 254"/>
          </g>
          <path fill="#9a9ab2" d="M363 354L393 367 363 376 333 366z"/>
          <path fill="#7d7d9c" d="M333 366L363 376V413L333 403z"/>
          <path fill="#8a8aa6" d="M363 376L393 367V402L363 413z"/>
          <path fill="#3a3a58" d="M405 376H441L423 394z"/>
        </svg>

        <svg class="axis-cross" width="34" height="40" viewBox="0 0 34 40" aria-label="Axis cross">
          <path stroke="#20208a" stroke-width="1.500" d="M4 32V14"/><path fill="#20208a" d="M4 10L7 19H1z"/>
          <path stroke="#8a2020" stroke-width="1.500" d="M4 32L20 37"/><path fill="#8a2020" d="M25 38.500L16 38 18 34z"/>
          <path stroke="#208a20" d="M4 32L10 26"/><circle fill="#208a20" cx="10.500" cy="25" r="2.200"/>
          <text x="5" y="9">Z</text>
          <text x="14" y="22">Y</text>
          <text x="26" y="38">X</text>
        </svg>
      </div>

      <div class="doc-tabs">
        <div class="doc-tab start">
          <svg class="icon-sm"><use href="#i-logo"/></svg>
          <a href="#" lang="ja">スタートページ</a>
          <button type="button" aria-label="Close start page"><svg width="8" height="8"><path d="M1 1L7 7M7 1L1 7"/></svg></button>
        </div>
        <div class="doc-tab active">
          <svg class="icon-sm"><use href="#i-logo"/></svg>
          <a href="#">Unnamed : 1*</a>
          <button type="button" aria-label="Close document"><svg width="8" height="8"><path d="M1 1L7 7M7 1L1 7"/></svg></button>
        </div>
      </div>
    </div>
  </main>

  <footer class="statusbar">
    <span class="message">Preselected: Unnamed.Body.Origin.XY_Plane. (32.500000 mm, -2.403912 mm, 0.000000 mm)</span>
    <button type="button" class="nav-style">
      <svg width="10" height="14"><rect x="1" y="1" width="8" height="12" rx="3"/><path d="M5 3.500V6.500"/></svg>
      CAD
      <span class="arrow"></span>
    </button>
    <span class="dimension">143.19 mm x 100.00 mm</span>
    <svg class="size-grip" width="9" height="9"><path d="M6 0h2v2h-2zM3 3h2v2h-2zM6 3h2v2h-2zM0 6h2v2h-2zM3 6h2v2h-2zM6 6h2v2h-2z"/></svg>
  </footer>
</body>
</html>
```

FILE: styles.css
```
/* === Reset and Base === */
* {
  margin: 0;
  padding: 0;
  box-sizing: border-box;
}

html {
  background: #fff;
}

body {
  display: flex;
  flex-direction: column;
  height: 100vh;
  border: 1px solid #b9b9b9;
  border-radius: 8px;
  overflow: hidden;
  background: #efefef;
  color: #000;
  font-family: "Liberation Sans", "Noto Sans CJK JP", sans-serif;
  font-size: 12px;
}

button,
select,
input {
  font: inherit;
  color: inherit;
}

button {
  border: none;
  background: none;
}

a {
  color: inherit;
  text-decoration: none;
}

.sprite {
  position: absolute;
  width: 0;
  height: 0;
}

.icon {
  display: block;
  width: 24px;
  height: 24px;
}

.icon-sm {
  width: 16px;
  height: 16px;
  flex: none;
}

/* === Icon paints === */
.teal {
  fill: #1fc9ce;
  stroke: #08484b;
  stroke-width: 1.3;
}

.t-line {
  fill: none;
  stroke: #08484b;
  stroke-width: 4.5;
}

.t-line.thin {
  stroke-width: 2.3;
}

.t-in {
  fill: none;
  stroke: #2ad4d8;
  stroke-width: 0.8;
}

.t-in.wide {
  stroke-width: 2.2;
}

.g { fill: #a9a9a9; stroke: #828282; }
.gl { fill: #dedede; stroke: #8c8c8c; stroke-width: 0.9; }
.gd { fill: #8a8a8a; stroke: #707070; stroke-width: 0.9; }
.n { fill: none; stroke: #7c7c7c; }
.s { stroke: #767676; stroke-width: 0.9; }
.thick { stroke-width: 2.5; }

/* === Title and menu === */
.titlebar {
  display: flex;
  align-items: center;
  gap: 5px;
  flex: none;
  height: 30px;
  padding-left: 8px;
  background: #eef3fa;
}

.titlebar h1 {
  font: 11px "Noto Sans", sans-serif;
}

.window-buttons {
  display: flex;
  margin-left: auto;
}

.window-buttons button {
  width: 46px;
  height: 30px;
}

.window-buttons svg {
  fill: none;
  stroke: #000;
}

.menubar {
  display: flex;
  align-items: center;
  flex: none;
  height: 21px;
  background: #fff;
  font: 11px "Noto Sans", sans-serif;
}

.menubar a {
  padding: 0 8px;
}

/* === Toolbars === */
.toolbar-row {
  display: flex;
  flex: none;
  height: 34px;
  border-top: 1px solid #fff;
  border-bottom: 1px solid #b4b4b4;
}

.toolbar {
  display: flex;
  align-items: center;
  padding-right: 2px;
  border-right: 1px solid #b4b4b4;
}

.toolbar.last {
  flex: 1;
  border-right: none;
}

.toolbar::before {
  content: "";
  width: 2px;
  height: 26px;
  margin: 0 3px 0 4px;
  background: repeating-linear-gradient(#b8b8b8 0 2px, #efefef 2px 4px);
}

.tool {
  display: grid;
  place-items: center;
  width: 31px;
  height: 30px;
}

.drop {
  display: grid;
  place-items: center;
  width: 12px;
  height: 30px;
}

.drop::before,
.arrow {
  content: "";
  border: 4px solid transparent;
  border-top-color: #222;
  border-bottom: none;
}

.drop:disabled::before {
  border-top-color: #666;
}

.on {
  background: #bfdcf3;
  border: 1px solid #90c8f6;
}

.drop.on {
  border-left: none;
}

.sep {
  width: 1px;
  height: 24px;
  margin: 0 3px 0 2px;
  background: #cacaca;
}

.more {
  margin-left: auto;
  padding: 0 1px;
}

.workbench {
  display: grid;
  grid-template-columns: 24px 1fr 14px;
  align-items: center;
  width: 151px;
  height: 22px;
  padding-left: 5px;
  border: 1px solid #d0d0d0;
  border-bottom-color: #999;
  border-radius: 3px;
  background: #fff;
}

.workbench .icon-sm,
.workbench select,
.workbench .chevron {
  grid-row: 1;
}

.workbench select {
  grid-column: 1 / 4;
  padding-left: 19px;
  height: 20px;
  appearance: none;
  border: none;
  background: none;
}

.workbench .icon-sm {
  grid-column: 1;
}

.workbench .chevron {
  grid-column: 3;
  fill: none;
  stroke: #555;
}

/* === Dock === */
main {
  display: flex;
  flex: 1;
  min-height: 0;
}

.dock {
  display: flex;
  flex-direction: column;
  flex: none;
  width: 365px;
  padding: 0 4px 3px 0;
}

.dock-title {
  display: flex;
  align-items: center;
  justify-content: space-between;
  height: 20px;
  padding: 0 6px 0 4px;
  border: 1px solid #b9b9b9;
  background: #dadada;
}

.dock-title h2 {
  font: 11px "Noto Sans", sans-serif;
}

.dock-title button {
  height: 12px;
}

.dock-title svg {
  display: block;
  fill: none;
  stroke: #333;
}

.dock-tabs {
  display: flex;
  align-items: flex-end;
  flex: none;
  height: 26px;
  padding-left: 2px;
}

.dock-tabs button {
  height: 22px;
  padding: 0 8px;
  border: 1px solid #e2e2e2;
  border-bottom: none;
  background: #f2f2f2;
}

.dock-tabs .active {
  display: flex;
  align-items: center;
  gap: 3px;
  height: 24px;
  padding: 0 11px 0 12px;
  background: #fbfbfb;
}

.task-panel {
  flex: 1;
  margin: 1px 4px 0 2px;
  padding: 18px 8px 0;
  border: 1px solid #82828c;
  background: linear-gradient(#acacc2, #333366 190px);
}

.dialog-buttons {
  display: flex;
  justify-content: center;
  gap: 8px;
  margin-bottom: 18px;
}

.dialog-buttons button {
  width: 73px;
  height: 21px;
  border: 1px solid #d0d0d0;
  border-radius: 3px;
  background: #fdfdfd;
}

.dialog-buttons .default {
  border-color: #0078d4;
}

.task-box {
  border: 1px solid #fff;
  border-radius: 4px 4px 0 0;
  background: #d6dff7;
}

.task-head {
  display: flex;
  align-items: center;
  gap: 1px;
  height: 24px;
  padding: 0 3px 0 5px;
  border-bottom: 1px solid #fff;
  border-radius: 3px 3px 0 0;
  background: linear-gradient(90deg, #fff, #c6d3f7);
}

.task-head h3 {
  font-size: 13px;
  color: #215dc6;
}

.task-head button {
  display: grid;
  place-items: center;
  width: 16px;
  height: 16px;
  margin-left: auto;
  border: 1px solid #b4b8c8;
  border-radius: 50%;
  background: #fff;
}

.task-head button svg {
  fill: none;
  stroke: #00349a;
  stroke-width: 1.5;
}

.task-body {
  padding: 13px 13px 14px;
}

.feature-list {
  height: 192px;
  padding: 2px 4px;
  border: 1px solid #828790;
  background: #fff;
  font: 11px/17px "Noto Sans", sans-serif;
  list-style: none;
}

.option {
  display: flex;
  align-items: center;
  gap: 5px;
  height: 22px;
}

.option.used {
  margin: 3px 0 5px;
}

.option.off {
  color: #7c7c7c;
}

.option input {
  appearance: none;
  width: 13px;
  height: 13px;
  border: 1px solid #5a5a5a;
  border-radius: 3px;
  background: #f3f3f3;
}

.option input[type="radio"] {
  border-color: #c2c2c2;
  border-radius: 50%;
  background: #f8f8f8;
}

.option input[type="radio"]:checked {
  border: 4px solid #c0c0c0;
}

fieldset {
  padding: 1px 11px 8px;
  border: 1px solid #b8bcc4;
  border-radius: 3px;
}

legend {
  margin-left: 1px;
  padding: 0 4px;
  line-height: 16px;
}

hr {
  margin: 3px 0 4px;
  border: none;
  border-top: 1px solid #a0a0a0;
  border-bottom: 1px solid #fff;
}

/* === 3D view === */
.workspace {
  display: flex;
  flex-direction: column;
  flex: 1;
  min-width: 0;
}

.view3d {
  position: relative;
  flex: 1;
  min-height: 0;
  background: linear-gradient(#333366, #9797aa);
}

.scene {
  display: block;
  width: 100%;
  height: 100%;
}

.plane {
  fill: none;
  stroke: #3399ff;
  stroke-width: 2;
}

.plane-label {
  font-family: "Liberation Serif", serif;
  font-size: 19px;
}

.xz { fill: #2b75bd; }
.xy { fill: #285f9c; }
.yz { fill: #1c4670; }

.navcube {
  position: absolute;
  top: 0;
  right: 0;
  width: 141px;
  height: 146px;
}

.face {
  font-weight: bold;
  fill: #44454f;
}

.axis-cross {
  position: absolute;
  right: 2px;
  bottom: 24px;
  font-weight: bold;
  font-size: 10px;
}

/* === Document tabs === */
.doc-tabs {
  display: flex;
  align-items: flex-start;
  flex: none;
  height: 22px;
  padding-left: 2px;
  font-size: 11px;
}

.doc-tab {
  display: flex;
  align-items: center;
  gap: 4px;
  height: 20px;
  padding: 0 12px;
  border: 1px solid #e2e2e2;
  border-top: none;
  background: #f2f2f2;
}

.doc-tab.start {
  gap: 3px;
  padding: 0 10px 0 8px;
  font-size: 10px;
}

.doc-tab.active {
  height: 22px;
  background: #fbfbfb;
}

.doc-tab button {
  display: grid;
  place-items: center;
  width: 14px;
  height: 14px;
  border: 1px solid #999;
  border-radius: 2px;
  background: #b5b5b5;
}

.doc-tab.active button {
  border-color: #d0442a;
  background: #e8764e;
}

.doc-tab button svg {
  stroke: #fff;
  stroke-width: 2;
}

/* === Status bar === */
.statusbar {
  display: flex;
  align-items: center;
  flex: none;
  height: 30px;
  padding-left: 2px;
  font-size: 11px;
}

.message {
  flex: 1;
}

.nav-style,
.dimension {
  display: flex;
  align-items: center;
  height: 26px;
  border-left: 1px solid #d6d6d6;
}

.nav-style {
  gap: 5px;
  padding: 0 8px 0 18px;
}

.nav-style svg {
  fill: none;
  stroke: #333;
  stroke-width: 1.5;
}

.nav-style .arrow {
  margin-left: 3px;
  border-top-color: #000;
}

.dimension {
  padding: 0 1px 0 5px;
  border-right: 1px solid #d6d6d6;
}

.size-grip {
  align-self: flex-end;
  margin: 0 2px 2px 8px;
  fill: #b4b4b4;
}
```
